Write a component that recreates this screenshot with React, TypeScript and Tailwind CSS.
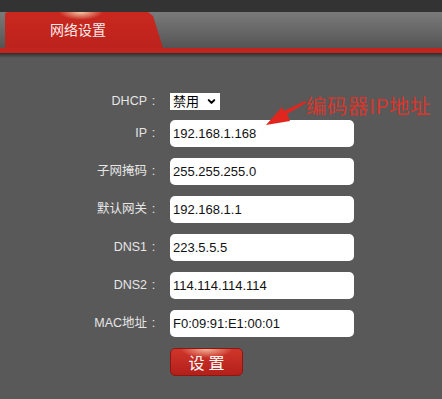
import { ChevronDown } from "lucide-react";

const rows = [
  { label: "IP", value: "192.168.1.168" },
  { label: "子网掩码", value: "255.255.255.0" },
  { label: "默认网关", value: "192.168.1.1" },
  { label: "DNS1", value: "223.5.5.5" },
  { label: "DNS2", value: "114.114.114.114" },
  { label: "MAC地址", value: "F0:09:91:E1:00:01" },
];

const font = "font-['Liberation_Sans','Noto_Sans_CJK_SC',sans-serif]";

function Label({ text, tight }: { text: string; tight?: boolean }) {
  return (
    <div
      className={`flex justify-end items-center text-[12.5px] leading-[17px] text-[#e6e6e6] ${
        tight ? "h-[17px] -mb-[1px]" : ""
      }`}
    >
      <span>{text}</span>
      <span className="w-[13px] text-center">:</span>
    </div>
  );
}

export default function App() {
  return (
    <div className={`relative w-[442px] h-[399px] overflow-hidden bg-[#595959] ${font}`}>
      {/* top strip */}
      <div className="h-[12px] bg-[#333333]" />

      {/* header with tab */}
      <div className="flex h-[36px] bg-[linear-gradient(to_bottom,#7a7a7a,#646464_60%,#545454)] pl-[5px]">
        <div className="w-[158px] h-full bg-[radial-gradient(ellipse_22px_8px_at_48%_0%,#f3c7a6,rgba(226,90,60,0)_100%),linear-gradient(to_bottom,#c9281f,#bc231c)] [clip-path:polygon(0_0,143px_0,148px_4px,158px_100%,0_100%)] rounded-tl-[3px] flex items-center">
          <span className="pl-[45px] text-[14px] text-[#fbeaea] leading-none">网络设置</span>
        </div>
      </div>
      <div className="h-[5px] bg-[#c0241d]" />
      <div className="h-[5px] bg-[linear-gradient(to_bottom,#2e2e2e,#595959)]" />

      {/* form */}
      <div className="pt-[35px] grid grid-cols-[160px_184px] gap-x-[10px] gap-y-[11px] items-center">
        <Label text="DHCP" tight />
        <div className="w-[50px] h-[17px] -mb-[1px] bg-white flex items-center justify-between px-[3px] text-[13px] text-black leading-none">
          <span>禁用</span>
          <ChevronDown size={11} strokeWidth={4.5} />
        </div>

        {rows.map((r) => (
          <div key={r.label} className="contents">
            <Label text={r.label} />
            <div className="h-[27px] bg-white rounded-[5px] flex items-center pl-[3px] text-[13px] text-[#111]">
              {r.value}
            </div>
          </div>
        ))}

        <div />
        <button className="w-[73px] h-[28px] rounded-[5px] border border-[#8e1612] bg-[radial-gradient(ellipse_26px_9px_at_50%_0%,#f2b49a,rgba(220,70,50,0)_100%),linear-gradient(to_bottom,#d0362b,#b2201a)] text-white text-[16px] tracking-[4px] pl-[4px] font-['Noto_Sans_CJK_SC',sans-serif] leading-none">
          设置
        </button>
      </div>

      {/* annotation */}
      <div className="absolute left-[306px] top-[95px] text-[20.5px] leading-none text-[#d8362c] font-['Noto_Sans_CJK_SC',sans-serif] tracking-[0.5px]">
        编码器IP地址
      </div>
      <svg className="absolute left-[260px] top-[98px]" width="50" height="32" viewBox="0 0 50 32">
        <path d="M45 3 L46 5 L27 16 L30 23 L6 27 L22 9 L24 13 Z" fill="#e0261f" />
      </svg>
    </div>
  );
}
